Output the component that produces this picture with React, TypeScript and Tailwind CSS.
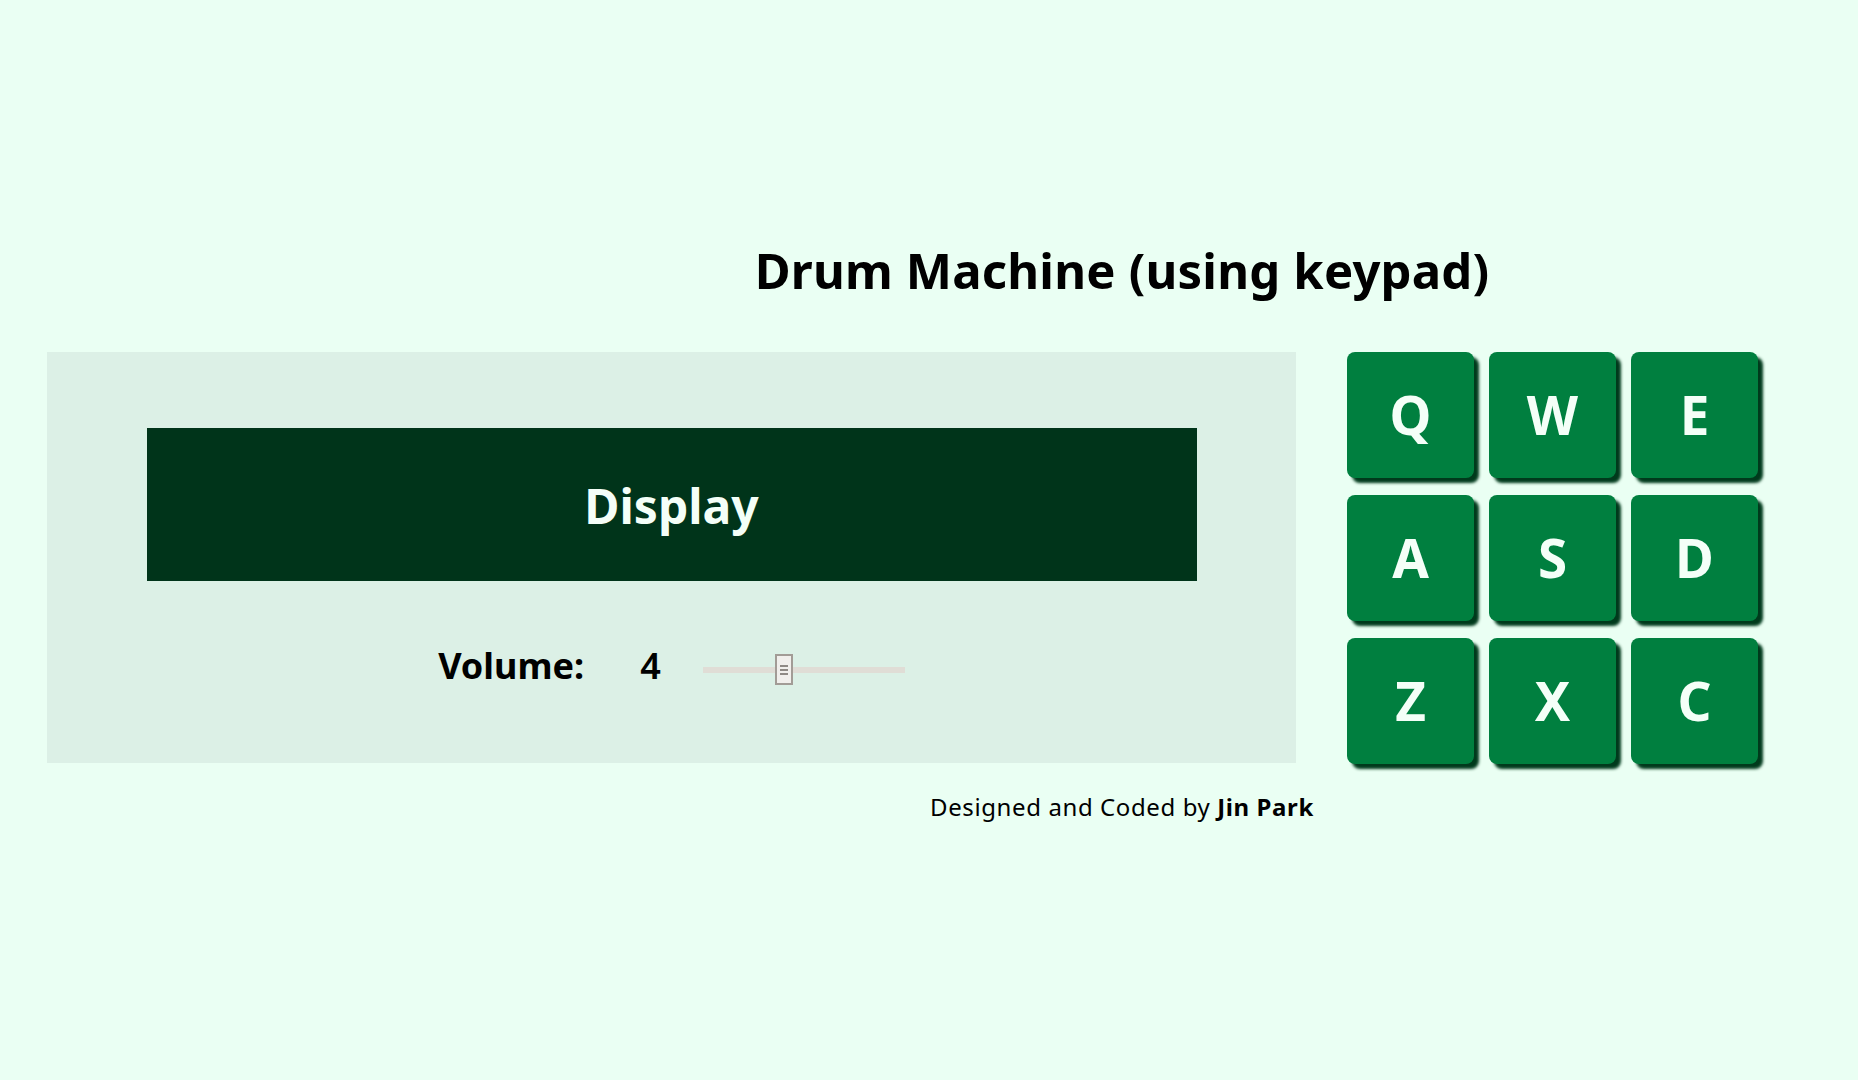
import React, { useState } from 'react'

const pads = ['Q', 'W', 'E', 'A', 'S', 'D', 'Z', 'X', 'C']

const font = { fontFamily: '"Noto Sans", "Open Sans", sans-serif' }

const VolumeSlider: React.FC<{ value: number; max: number }> = ({ value, max }) => {
  const pct = (value / max) * 100
  return (
    <div className="relative h-[31px] w-[202px] flex items-center">
      <div className="h-[6px] w-full bg-[#e0ddd6]" />
      <div
        className="absolute top-0 h-[31px] w-[18px] -translate-x-1/2 border-2 border-[#a29c96] bg-[#f1efec] flex flex-col items-center justify-center gap-[2px]"
        style={{ left: `${pct}%` }}
      >
        <div className="h-[2px] w-[8px] bg-[#8f8a85]" />
        <div className="h-[2px] w-[8px] bg-[#8f8a85]" />
        <div className="h-[2px] w-[8px] bg-[#8f8a85]" />
      </div>
    </div>
  )
}

const App: React.FC = () => {
  const [volume] = useState(4)

  return (
    <div className="min-h-screen w-full bg-[#eafff3] pt-[238px] text-black" style={font}>
      <h1 className="pl-[386px] text-center text-[49px] font-bold leading-[64px] tracking-[0.2px]">
        Drum Machine (using keypad)
      </h1>

      <div className="mt-[50px] flex pl-[47px]">
        <div className="flex h-[411px] w-[1249px] flex-col items-center bg-[#dcf0e6] pt-[76px]">
          <div className="flex h-[153px] w-[1050px] items-center justify-center bg-[#00341a] pt-[3px] text-[48px] font-bold text-[#f4fff8]">
            Display
          </div>
          <div className="mt-[65px] flex items-center">
            <span className="text-[36px] font-bold leading-none">Volume:</span>
            <span className="ml-[56px] text-[36px] font-semibold leading-none">{volume}</span>
            <div className="ml-[42px] mt-[8px]">
              <VolumeSlider value={volume} max={10} />
            </div>
          </div>
        </div>

        <div className="ml-[51px] grid grid-cols-[repeat(3,127px)] gap-x-[15px] gap-y-[17px]">
          {pads.map((key) => (
            <button
              key={key}
              className="flex h-[126px] w-[127px] items-center justify-center rounded-[8px] bg-[#007f3f] text-[53px] font-bold text-[#f4fff8] shadow-[5px_5px_3px_#003a1c]"
            >
              {key}
            </button>
          ))}
        </div>
      </div>

      <p className="mt-[25px] pl-[386px] text-center text-[24px] tracking-[0.6px]">
        Designed and Coded by <span className="font-bold">Jin Park</span>
      </p>
    </div>
  )
}

export default App
